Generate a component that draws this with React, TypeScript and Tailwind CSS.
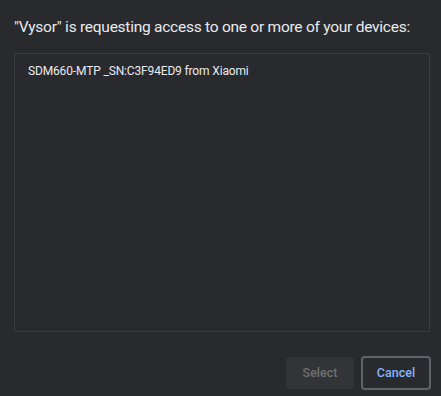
export default function App() {
  return (
    <div
      className="w-[441px] h-[396px] bg-[#292a2d] text-[#e8eaed] flex flex-col px-[14px] pt-[16px] overflow-hidden"
      style={{ fontFamily: 'Roboto, "Noto Sans", sans-serif' }}
    >
      <div className="text-[15.5px] leading-[22px] h-[37px] whitespace-nowrap tracking-[-0.25px]">
        "Vysor" is requesting access to one or more of your devices:
      </div>
      <div className="h-[279px] w-[416px] border border-[#3c3d40] rounded-[2px] px-[13px] pt-[7px]">
        <div className="text-[12px] leading-[20px] whitespace-nowrap tracking-[-0.15px]">
          SDM660-MTP _SN:C3F94ED9 from Xiaomi
        </div>
      </div>
      <div className="flex justify-end items-center gap-[7px] pt-[24px] -mr-[4px]">
        <button className="w-[68px] h-[32px] rounded-[4px] bg-[#333437] text-[#6f7073] text-[12.5px] font-medium">
          Select
        </button>
        <button className="w-[70px] h-[34px] rounded-[4px] border-2 border-[#5f6368] bg-[#292a2d] text-[#8ab4f8] text-[12.5px] font-medium">
          Cancel
        </button>
      </div>
    </div>
  );
}
